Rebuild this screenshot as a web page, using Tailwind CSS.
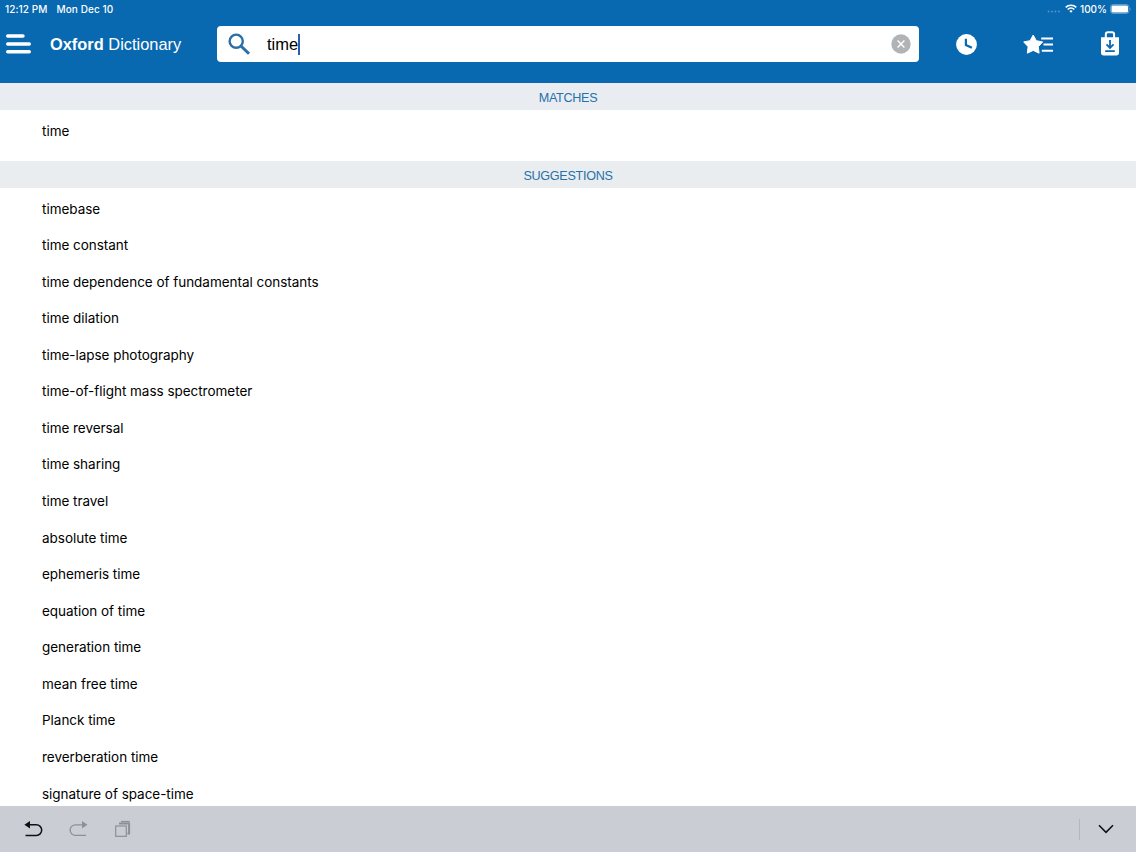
<!DOCTYPE html>
<html lang="en">
<head>
    <meta charset="UTF-8">
    <meta name="viewport" content="width=device-width, initial-scale=1.0">
    <title>Oxford Dictionary</title>
    <script src="https://cdn.jsdelivr.net/npm/@tailwindcss/browser@4"></script>
</head>
<body class="h-screen overflow-hidden flex flex-col bg-white font-['Inter',sans-serif] text-black">
    <header class="h-[83px] shrink-0 bg-[#0868b0] text-white">
        <!-- Status bar -->
        <div class="h-[17px] flex items-center justify-between pl-[5px] pr-[5px] text-[10px] leading-none font-medium">
            <div class="flex gap-[9px] whitespace-nowrap tracking-[0.08px]">
                <span>12:12 PM</span>
                <span>Mon Dec 10</span>
            </div>
            <div class="flex items-center">
                <svg class="w-[14px] h-[3px] mr-[4px] mt-[5px]" viewBox="0 0 14 3" fill="#5094ca">
                    <circle cx="1.5" cy="1.5" r="1"/><circle cx="5" cy="1.5" r="1"/><circle cx="8.5" cy="1.5" r="1"/><circle cx="12" cy="1.5" r="1"/>
                </svg>
                <svg class="w-[12px] h-[9px] mr-[3px]" viewBox="0 0 12 9" fill="none" stroke="white" stroke-width="1.6">
                    <path d="M0.7 3.4a7.6 7.6 0 0 1 10.6 0"/>
                    <path d="M2.7 5.5a4.7 4.7 0 0 1 6.6 0"/>
                    <path d="M6 8.7L4.3 7a2.4 2.4 0 0 1 3.4 0z" fill="white" stroke="none"/>
                </svg>
                <span class="mr-[3px]">100%</span>
                <svg class="w-[21px] h-[10px]" viewBox="0 0 21 10">
                    <rect x="0.5" y="0.5" width="18.5" height="9" rx="2.5" fill="none" stroke="#5b9ccf"/>
                    <rect x="1.5" y="1.5" width="16.5" height="7" rx="1.3" fill="white"/>
                    <path d="M19.8 3.4c1.1.4 1.1 2.8 0 3.2z" fill="#5b9ccf"/>
                </svg>
            </div>
        </div>

        <!-- Navigation bar -->
        <div class="h-[54px] flex items-center pl-[6px] pr-[16px]">
            <svg class="w-[25px] h-[20px] shrink-0" viewBox="0 0 25 20" stroke="white" stroke-width="3.4" stroke-linecap="round">
                <path d="M1.7 2H17M1.7 10H23.3M1.7 17.7H23.3"/>
            </svg>
            <h1 class="ml-[19px] w-[167px] whitespace-nowrap text-[16.4px] leading-none font-['Liberation_Sans',sans-serif]"><span class="font-bold">Oxford</span> Dictionary</h1>
            <div class="flex items-center w-[702px] h-[36px] rounded-[4px] bg-white text-black">
                <svg class="ml-[11px] w-[23px] h-[22px]" viewBox="0 0 23 22" fill="none" stroke="#2a6fa8">
                    <circle cx="8.2" cy="8.2" r="6.6" stroke-width="2.4"/>
                    <path d="M13 13l8 7.8" stroke-width="3"/>
                </svg>
                <span class="ml-[16px] text-[16.5px] leading-none font-['Liberation_Sans',sans-serif]">time</span>
                <span class="w-[1.5px] h-[21px] bg-[#2b5fae]"></span>
                <svg class="ml-auto mr-[8px] w-[20px] h-[20px]" viewBox="0 0 20 20">
                    <circle cx="10" cy="10" r="9.7" fill="#b1b4b7"/>
                    <path d="M6.6 6.6l6.8 6.8M13.4 6.6l-6.8 6.8" stroke="white" stroke-width="1.4"/>
                </svg>
            </div>
            <svg class="ml-[37px] w-[21px] h-[21px]" viewBox="0 0 21 21">
                <circle cx="10.5" cy="10.5" r="10.4" fill="white"/>
                <path d="M9.9 4.8v6.2l6 2.8" fill="none" stroke="#0868b0" stroke-width="2.2"/>
            </svg>
            <svg class="ml-[46px] w-[31px] h-[20px]" viewBox="0 0 31 20">
                <path d="M10.2 1l3.1 5.7 6.4 1.2-4.4 4.8.8 6.5-5.9-2.8-5.9 2.8.8-6.5L.7 7.9l6.4-1.2z" fill="white" stroke="white" stroke-width="1" stroke-linejoin="round"/>
                <path d="M18.2 4.5H30M20.5 10.5H30M18.8 16.7H30" stroke="white" stroke-width="2.1"/>
            </svg>
            <svg class="ml-auto mb-px w-[20px] h-[25px]" viewBox="0 0 20 25">
                <path d="M5.8 7V3.4Q5.8 1.3 7.9 1.3H12Q14.1 1.3 14.1 3.4V7" fill="none" stroke="white" stroke-width="2"/>
                <path d="M1 6.2H19V21.8Q19 24.5 16.3 24.5H3.7Q1 24.5 1 21.8z" fill="white"/>
                <path d="M10 9v7.6M6.5 13.4l3.5 3.5 3.5-3.5M5.2 20.2h9.6" fill="none" stroke="#0868b0" stroke-width="1.8"/>
            </svg>
        </div>
    </header>

    <main class="flex-1 min-h-0 overflow-hidden text-[13.5px] tracking-[-0.03px]">
        <h2 class="h-[27px] flex items-center justify-center bg-[#e9edf1] text-[#2671ab] text-[12.6px] tracking-[-0.3px] font-['Liberation_Sans',sans-serif] pt-[3px]">MATCHES</h2>
        <ul class="h-[51px] pl-[42px] pt-[2.6px]">
            <li class="h-[36.57px] flex items-center">time</li>
        </ul>
        <h2 class="h-[27px] flex items-center justify-center bg-[#e9edf0] text-[#2671ab] text-[12.6px] tracking-[-0.3px] font-['Liberation_Sans',sans-serif] pt-[3px]">SUGGESTIONS</h2>
        <ul id="suggestions" class="pl-[42px] pt-[2.4px]"></ul>
    </main>

    <!-- Keyboard shortcut bar -->
    <footer class="h-[46px] shrink-0 flex items-center bg-[#cacdd3] pl-[24px] pr-[22px]">
        <svg class="w-[19px] h-[18px]" viewBox="0 0 19 18" fill="none" stroke="#111" stroke-width="1.5">
            <path d="M4 4.8H12.4a5.2 5.2 0 0 1 0 10.6H1.5"/>
            <path d="M6 1v7.4L.4 4.7z" fill="#111" stroke="none"/>
        </svg>
        <svg class="ml-[26px] w-[19px] h-[18px]" viewBox="0 0 19 18" fill="none" stroke="#8d9096" stroke-width="1.3">
            <path d="M15 4.8H6.4a5.2 5.2 0 0 0 0 10.6H17"/>
            <path d="M13 1v7.4l5.4-3.7z" fill="#8d9096" stroke="none"/>
        </svg>
        <svg class="ml-[27px] w-[17px] h-[18px]" viewBox="0 0 17 18" fill="none" stroke="#8d9096">
            <rect x="0.7" y="6" width="10.6" height="10.3" stroke-width="1.2"/>
            <path d="M4 3.5H14.1V13.5H12.5" stroke-width="2"/>
            <path d="M6 1.6h8.6" stroke-width="1.4"/>
        </svg>
        <span class="ml-auto w-[1.5px] h-[21px] bg-[#b3b6bb]"></span>
        <svg class="ml-[18px] w-[16px] h-[10px]" viewBox="0 0 16 10" fill="none" stroke="#111" stroke-width="1.6">
            <path d="M1 1.3l7 7 7-7"/>
        </svg>
    </footer>

    <script>
        const suggestions = [
            'timebase',
            'time constant',
            'time dependence of fundamental constants',
            'time dilation',
            'time-lapse photography',
            'time-of-flight mass spectrometer',
            'time reversal',
            'time sharing',
            'time travel',
            'absolute time',
            'ephemeris time',
            'equation of time',
            'generation time',
            'mean free time',
            'Planck time',
            'reverberation time',
            'signature of space-time'
        ];

        const list = document.getElementById('suggestions');

        suggestions.forEach(term => {
            const item = document.createElement('li');
            item.className = 'h-[36.57px] flex items-center whitespace-nowrap';
            item.textContent = term;
            list.appendChild(item);
        });
    </script>
</body>
</html>
